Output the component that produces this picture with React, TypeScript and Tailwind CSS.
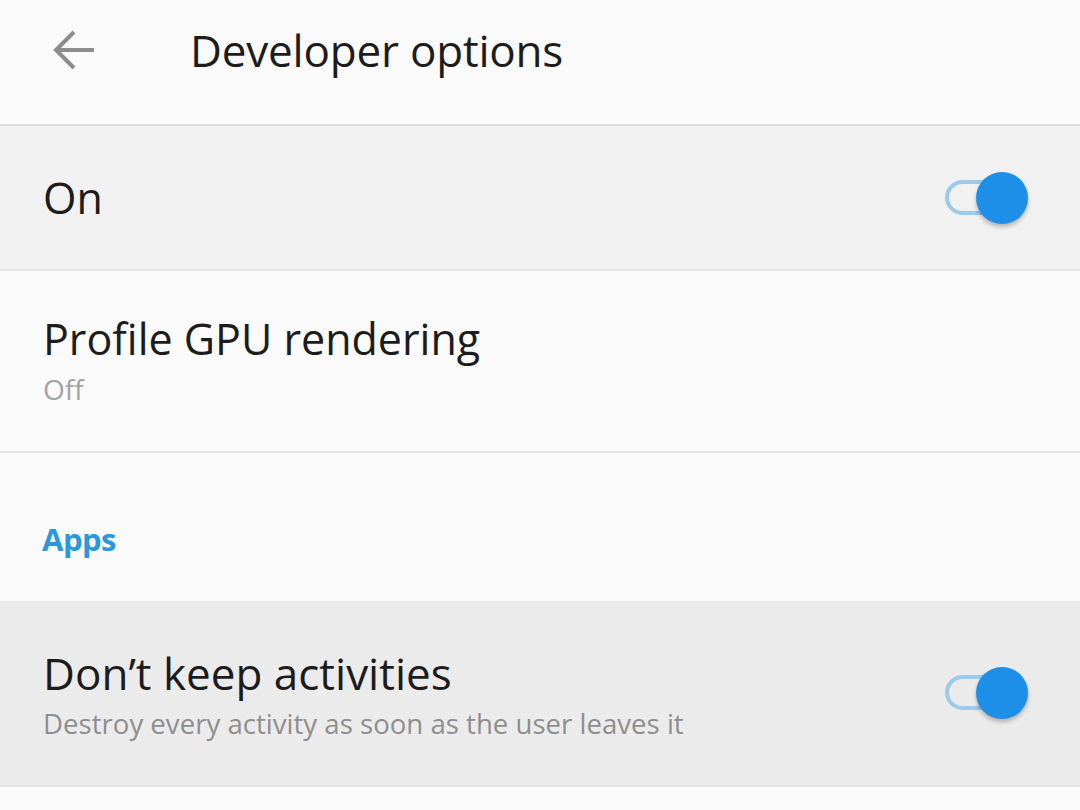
import React from 'react';

function Toggle() {
  return (
    <div className="relative h-[54px] w-[86px] shrink-0">
      <div className="absolute left-0 top-[9px] h-[35px] w-[66px] rounded-full border-[4px] border-[#9ccaed]" />
      <div className="absolute right-[3px] top-[1px] h-[52px] w-[52px] rounded-full bg-[#1e8fe9] shadow-[0_3px_4px_rgba(0,0,0,0.25)]" />
    </div>
  );
}

export default function App() {
  return (
    <div
      className="flex h-[810px] w-[1080px] flex-col overflow-hidden bg-[#fafafa] text-[#1c1c1c]"
      style={{ fontFamily: '"Open Sans", "Noto Sans", sans-serif' }}
    >
      <header className="flex h-[126px] shrink-0 items-center border-b-2 border-[#dedede] pb-[24px]">
        <div className="flex w-[190px] items-center pl-[52px]">
          <svg width="44" height="44" viewBox="0 0 44 44" fill="none" stroke="#8d8d8d" strokeWidth="4">
            <path d="M42 22H5" />
            <path d="M22 4L4 22l18 18" />
          </svg>
        </div>
        <h1 className="text-[44px] leading-none tracking-[-0.2px]">Developer options</h1>
      </header>

      <div className="flex h-[145px] shrink-0 items-center justify-between border-b-2 border-[#e6e6e6] bg-[#f1f1f1] pl-[43px] pr-[49px]">
        <span className="text-[43px] leading-none">On</span>
        <Toggle />
      </div>

      <div className="flex h-[182px] shrink-0 flex-col justify-center border-b-2 border-[#e6e6e6] pl-[43px]">
        <span className="text-[43px] leading-[1.1]">Profile GPU rendering</span>
        <span className="mt-[9px] text-[28px] leading-tight text-[#a3a3a3]">Off</span>
      </div>

      <div className="flex h-[148px] shrink-0 items-center pl-[42px] pt-[24px]">
        <span className="text-[31px] font-bold tracking-[-0.5px] text-[#2b98db]">Apps</span>
      </div>

      <div className="flex h-[186px] shrink-0 items-center justify-between border-b-2 border-[#e3e3e3] bg-[#ebebeb] pl-[43px] pr-[49px]">
        <div className="flex flex-col pt-[4px]">
          <span className="text-[44px] leading-[1.1]">Don’t keep activities</span>
          <span className="mt-[9px] text-[27.6px] leading-tight text-[#8e8e8e]">
            Destroy every activity as soon as the user leaves it
          </span>
        </div>
        <Toggle />
      </div>

      <div className="flex-1" />
    </div>
  );
}
